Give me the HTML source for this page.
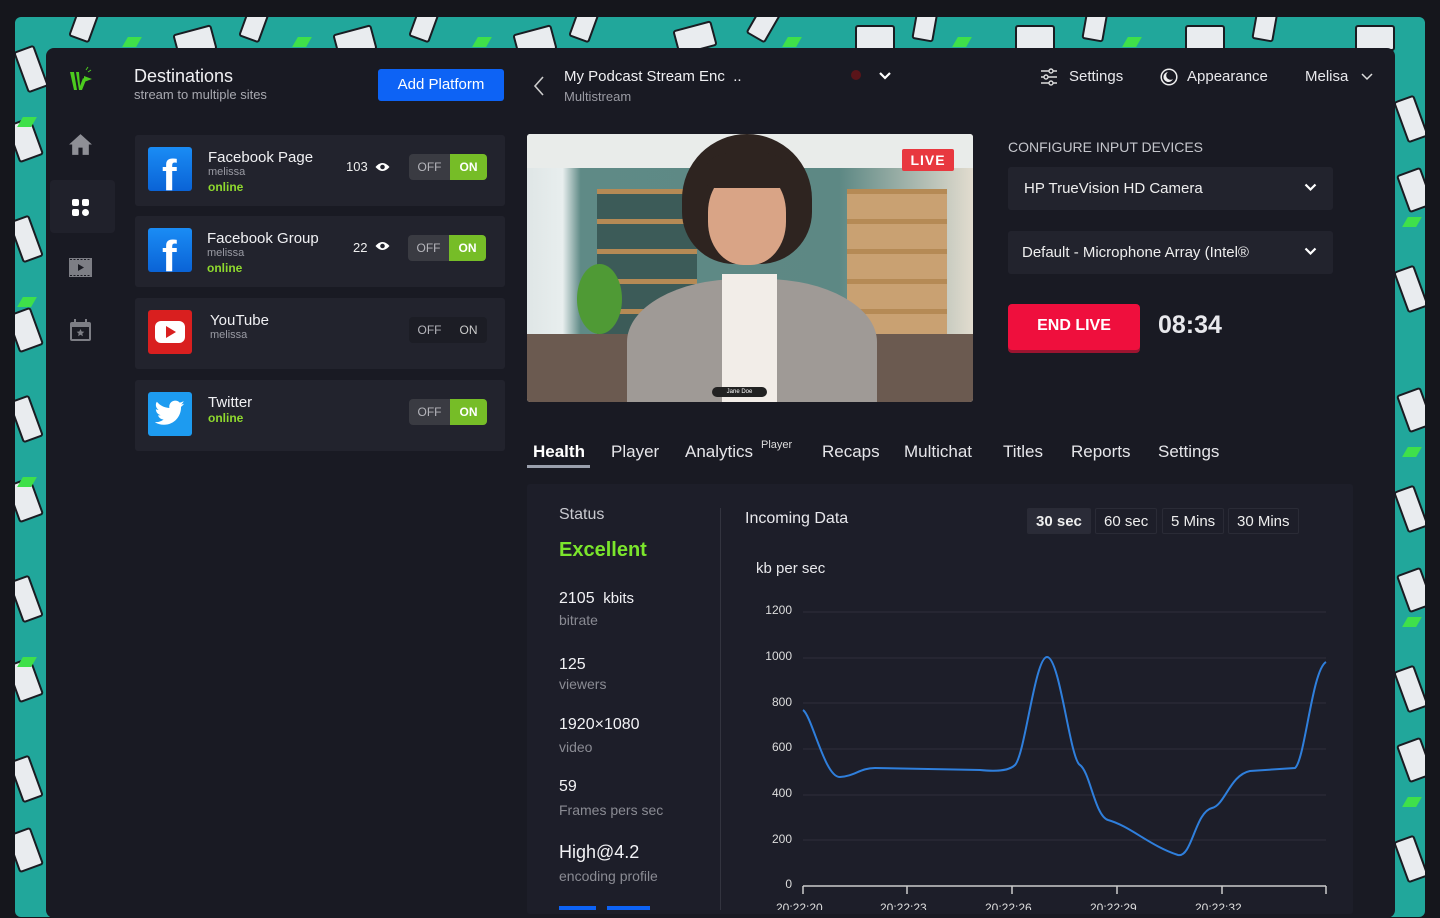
<!DOCTYPE html>
<html><head><meta charset="utf-8"><style>
*{box-sizing:border-box;margin:0;padding:0}
body{width:1440px;height:910px;overflow:hidden;background:#15161c;font-family:"Liberation Sans",sans-serif;color:#e8e8ec;position:relative}
.bg{position:absolute;left:15px;top:17px;width:1410px;height:900px;background:#21a79b;border-radius:6px;overflow:hidden}
.bg i{position:absolute;width:22px;height:44px;background:#e9ecef;border:2px solid #1a1c22;border-radius:3px}
.bg u{position:absolute;width:40px;height:26px;background:#e9ecef;border:2px solid #1a1c22;border-radius:3px}
.bg b{position:absolute;width:14px;height:10px;background:#3fe04a;transform:skewX(-30deg)}
.main{position:absolute;left:46px;top:48px;width:1349px;height:870px;background:#191a23;border-radius:8px}
.abs{position:absolute}
.card{position:absolute;left:135px;width:370px;height:71px;background:#22232d;border-radius:3px}
.fb{position:absolute;left:13px;top:12px;width:44px;height:44px;border-radius:3px;background:linear-gradient(#1a8cf5,#0a63d6);overflow:hidden}
.fb span{position:absolute;left:14px;top:7px;font:bold 44px "Liberation Sans",sans-serif;color:#fff;line-height:44px}
.nm{position:absolute;left:73px;top:14px;font-size:15px;color:#f0f0f3}
.us{position:absolute;left:73px;top:31px;font-size:11px;color:#9a9ba4}
.on{position:absolute;left:73px;top:45px;font-size:12px;font-weight:bold;color:#8fd92e}
.tg{position:absolute;left:274px;top:19px;width:78px;height:26px;border-radius:4px;background:#3a3b42;font-size:12px;color:#b5b5bb}
.tg .o{position:absolute;left:0;top:0;width:41px;height:26px;line-height:26px;text-align:center}
.tg .n{position:absolute;left:41px;top:0;width:37px;height:26px;line-height:26px;text-align:center;background:#76bd27;color:#fff;font-weight:bold;border-radius:0 4px 4px 0}
.tg.off{background:#1c1d25}.tg.off .n{background:none;color:#ccc;font-weight:normal}
.vw{position:absolute;top:24px;font-size:13px;color:#eee}
.sel{position:absolute;left:1008px;width:325px;height:43px;background:#22232d;border-radius:3px;font-size:15px;color:#eee;line-height:43px;padding-left:16px}
.sel svg{position:absolute;right:16px;top:16px}
.tab{position:absolute;top:442px;font-size:17px;color:#e6e6ea}
.stl{position:absolute;left:559px;font-size:16px;color:#f2f2f5}
.sts{position:absolute;left:559px;font-size:14px;color:#8a8b93}
.tb{position:absolute;top:508px;height:26px;line-height:26px;font-size:15px;padding:0 8px;border:1px solid #2a2b36;border-radius:2px;color:#eee}
.yl{position:absolute;font-size:12px;color:#ddd;text-align:right;width:40px;left:752px}
</style></head><body>
<div class="bg">
<i style="left:5px;top:30px;transform:rotate(-20deg)"></i><i style="left:0;top:200px;transform:rotate(-20deg)"></i><i style="left:0;top:380px;transform:rotate(-20deg)"></i><i style="left:0;top:560px;transform:rotate(-20deg)"></i><i style="left:0;top:740px;transform:rotate(-20deg)"></i>
<u style="left:-10px;top:110px;transform:rotate(70deg)"></u><u style="left:-10px;top:300px;transform:rotate(70deg)"></u><u style="left:-10px;top:470px;transform:rotate(70deg)"></u><u style="left:-10px;top:650px;transform:rotate(70deg)"></u><u style="left:-10px;top:820px;transform:rotate(70deg)"></u>
<i style="left:60px;top:-20px;transform:rotate(20deg)"></i><i style="left:230px;top:-20px;transform:rotate(20deg)"></i><i style="left:400px;top:-20px;transform:rotate(20deg)"></i><i style="left:560px;top:-20px;transform:rotate(20deg)"></i><i style="left:740px;top:-20px;transform:rotate(30deg)"></i><i style="left:900px;top:-20px;transform:rotate(10deg)"></i><i style="left:1070px;top:-20px;transform:rotate(10deg)"></i><i style="left:1240px;top:-20px;transform:rotate(10deg)"></i>
<u style="left:160px;top:12px;transform:rotate(-15deg)"></u><u style="left:320px;top:12px;transform:rotate(-15deg)"></u><u style="left:500px;top:12px;transform:rotate(-15deg)"></u><u style="left:660px;top:8px;transform:rotate(-15deg)"></u><u style="left:840px;top:8px"></u><u style="left:1000px;top:8px"></u><u style="left:1170px;top:8px"></u><u style="left:1340px;top:8px"></u>
<i style="left:1385px;top:80px;transform:rotate(-20deg)"></i><i style="left:1385px;top:250px;transform:rotate(-20deg)"></i><i style="left:1385px;top:470px;transform:rotate(-20deg)"></i><i style="left:1385px;top:650px;transform:rotate(-20deg)"></i><i style="left:1385px;top:820px;transform:rotate(-20deg)"></i>
<u style="left:1380px;top:160px;transform:rotate(70deg)"></u><u style="left:1380px;top:380px;transform:rotate(70deg)"></u><u style="left:1380px;top:560px;transform:rotate(70deg)"></u><u style="left:1380px;top:730px;transform:rotate(70deg)"></u>
<b style="left:110px;top:20px"></b><b style="left:280px;top:20px"></b><b style="left:460px;top:20px"></b><b style="left:770px;top:20px"></b><b style="left:940px;top:20px"></b><b style="left:1110px;top:20px"></b><b style="left:5px;top:100px"></b><b style="left:5px;top:280px"></b><b style="left:5px;top:460px"></b><b style="left:5px;top:640px"></b><b style="left:1390px;top:200px"></b><b style="left:1390px;top:430px"></b><b style="left:1390px;top:600px"></b><b style="left:1390px;top:780px"></b>
</div>
<div class="main"></div>
<svg class="abs" style="left:68px;top:66px" width="26" height="28" viewBox="0 0 26 28"><path d="M2 6 L6 24 L9 24 L6 6Z M8 6 L11 24 L14 24 L18 14 L15 12 L12 20 L11 6Z M16 16 L24 13 L16 10Z" fill="#4ccb1e"/><path d="M18 4 L20 1 M20 6 L23 4" stroke="#4ccb1e" stroke-width="1"/></svg>
<div class="abs" style="left:50px;top:180px;width:65px;height:53px;background:#20212b;border-radius:4px"></div>
<svg class="abs" style="left:68px;top:132px" width="25" height="25" viewBox="0 0 24 24"><path d="M12 2 L23 12 L20 12 L20 22 L14 22 L14 15 L10 15 L10 22 L4 22 L4 12 L1 12Z" fill="#8e8f96"/></svg>
<svg class="abs" style="left:72px;top:199px" width="17" height="17" viewBox="0 0 17 17" fill="#fff"><rect x="0" y="0" width="7" height="7" rx="2"/><rect x="10" y="0" width="7" height="7" rx="2"/><rect x="0" y="10" width="7" height="7" rx="2"/><circle cx="13.5" cy="13.5" r="3.5"/></svg>
<svg class="abs" style="left:69px;top:258px" width="23" height="19" viewBox="0 0 23 19"><rect width="23" height="19" fill="#7d7e85"/><path d="M9 6 L15 9.5 L9 13Z" fill="#1a1b23"/><path d="M1 1.5h21M1 17.5h21" stroke="#1a1b23" stroke-dasharray="2 1.5"/></svg>
<svg class="abs" style="left:69px;top:319px" width="23" height="23" viewBox="0 0 23 23"><rect x="1" y="3" width="21" height="19" rx="2" fill="#7d7e85"/><rect x="3" y="8" width="17" height="12" fill="#1a1b23"/><path d="M6 0v5M17 0v5" stroke="#7d7e85" stroke-width="2"/><path d="M11.5 10l1.2 2.5 2.6.3-2 1.8.6 2.6-2.4-1.4-2.4 1.4.6-2.6-2-1.8 2.6-.3z" fill="#7d7e85"/></svg>
<div class="abs" style="left:134px;top:66px;font-size:18px;color:#f0f0f3">Destinations</div>
<div class="abs" style="left:134px;top:87px;font-size:13px;color:#a8a9b0">stream to multiple sites</div>
<div class="abs" style="left:378px;top:69px;width:126px;height:32px;background:#0d63f5;border-radius:3px;color:#fff;font-size:15px;line-height:32px;text-align:center">Add Platform</div>
<div class="card" style="top:135px"><div class="fb"><span>f</span></div><div class="nm">Facebook Page</div><div class="us">melissa</div><div class="on">online</div><div class="vw" style="left:211px">103</div><svg class="abs" style="left:240px;top:27px" width="15" height="10" viewBox="0 0 15 10"><path d="M0.5 5Q7.5 -3 14.5 5Q7.5 13 0.5 5Z" fill="#fff"/><circle cx="7.5" cy="5" r="2.3" fill="#22232d"/></svg><div class="tg"><div class="o">OFF</div><div class="n">ON</div></div></div>
<div class="card" style="top:216px"><div class="fb"><span>f</span></div><div class="nm" style="left:72px">Facebook Group</div><div class="us" style="left:72px">melissa</div><div class="on" style="left:72px">online</div><div class="vw" style="left:218px">22</div><svg class="abs" style="left:240px;top:25px" width="15" height="10" viewBox="0 0 15 10"><path d="M0.5 5Q7.5 -3 14.5 5Q7.5 13 0.5 5Z" fill="#fff"/><circle cx="7.5" cy="5" r="2.3" fill="#22232d"/></svg><div class="tg" style="left:273px;top:19px"><div class="o">OFF</div><div class="n">ON</div></div></div>
<div class="card" style="top:298px"><div class="abs" style="left:13px;top:12px;width:44px;height:44px;background:#d91f1f;border-radius:3px"><div class="abs" style="left:7px;top:11px;width:30px;height:22px;background:#fff;border-radius:6px"></div><svg class="abs" style="left:17px;top:16px" width="12" height="12"><path d="M1 0L11 6L1 12Z" fill="#d91f1f"/></svg></div><div class="nm" style="left:75px">YouTube</div><div class="us" style="left:75px">melissa</div><div class="tg off"><div class="o">OFF</div><div class="n">ON</div></div></div>
<div class="card" style="top:380px"><div class="abs" style="left:13px;top:12px;width:44px;height:44px;background:#1d9bf0;border-radius:3px"><svg class="abs" style="left:7px;top:8px" width="30" height="26" viewBox="0 0 24 20"><path d="M23.6 2.4c-.9.4-1.8.6-2.8.8 1-.6 1.8-1.6 2.1-2.7-.9.6-2 1-3.1 1.2C18.9.7 17.6.1 16.2.1c-2.7 0-4.8 2.2-4.8 4.8 0 .4 0 .8.1 1.1C7.4 5.800 3.900 3.900 1.500 1 .9 1.700.7 2.600.7 3.500c0 1.700.9 3.200 2.200 4-.8 0-1.500-.2-2.200-.6v.1c0 2.300 1.700 4.300 3.900 4.700-.4.100-.8.200-1.300.200-.3 0-.6 0-.9-.1.6 1.900 2.400 3.300 4.500 3.400-1.700 1.300-3.700 2.100-6 2.100-.4 0-.8 0-1.200-.1 2.100 1.400 4.700 2.200 7.400 2.200 8.900 0 13.700-7.400 13.700-13.700v-.6c1-.7 1.800-1.600 2.400-2.500z" fill="#fff"/></svg></div><div class="nm" style="left:73px">Twitter</div><div class="on" style="left:73px;top:31px">online</div><div class="tg"><div class="o">OFF</div><div class="n">ON</div></div></div>
<svg class="abs" style="left:533px;top:75px" width="12" height="22" viewBox="0 0 12 22"><path d="M10 2L2 11L10 20" stroke="#ccc" stroke-width="1.6" fill="none"/></svg>
<div class="abs" style="left:564px;top:68px;font-size:15px;color:#f0f0f3">My Podcast Stream Enc &nbsp;..</div>
<div class="abs" style="left:564px;top:89px;font-size:13px;color:#9a9ba3">Multistream</div>
<div class="abs" style="left:851px;top:70px;width:10px;height:10px;border-radius:50%;background:#5a1419"></div>
<svg class="abs" style="left:878px;top:71px" width="14" height="10"><path d="M2 2L7 7L12 2" stroke="#fff" stroke-width="2.2" fill="none"/></svg>
<svg class="abs" style="left:1040px;top:68px" width="18" height="18" viewBox="0 0 18 18" stroke="#ddd" stroke-width="1.4" fill="none"><path d="M1 3h16M1 9h16M1 15h16"/><circle cx="11" cy="3" r="2" fill="#191a23"/><circle cx="6" cy="9" r="2" fill="#191a23"/><circle cx="11" cy="15" r="2" fill="#191a23"/></svg>
<div class="abs" style="left:1069px;top:68px;font-size:15px">Settings</div>
<svg class="abs" style="left:1160px;top:68px" width="18" height="18" viewBox="0 0 18 18"><circle cx="9" cy="9" r="7.8" stroke="#eee" stroke-width="1.5" fill="none"/><path d="M8 4A5 5 0 1 0 13 11A4 4 0 0 1 8 4Z" fill="#eee"/></svg>
<div class="abs" style="left:1187px;top:68px;font-size:15px">Appearance</div>
<div class="abs" style="left:1305px;top:68px;font-size:15px">Melisa</div>
<svg class="abs" style="left:1361px;top:73px" width="12" height="8"><path d="M1 1L6 6L11 1" stroke="#ddd" stroke-width="1.5" fill="none"/></svg>
<div class="abs" style="left:527px;top:134px;width:446px;height:268px;border-radius:3px;overflow:hidden;background:linear-gradient(90deg,#dfe6e6 0,#e8eeee 8%,#5f8a86 12%,#5d8884 70%,#e2dccf 100%)">
<div class="abs" style="left:0;top:0;width:446px;height:34px;background:#e9ecea"></div>
<div class="abs" style="left:70px;top:55px;width:100px;height:150px;background:repeating-linear-gradient(#b58a55 0 5px,#3c5b58 5px 30px)"></div>
<div class="abs" style="left:320px;top:55px;width:100px;height:150px;background:repeating-linear-gradient(#b58a55 0 5px,#c9a172 5px 30px)"></div>
<div class="abs" style="left:50px;top:130px;width:45px;height:70px;background:#4f9a35;border-radius:50%"></div>
<div class="abs" style="left:0;top:200px;width:446px;height:68px;background:#6b5a50"></div>
<div class="abs" style="left:155px;top:0;width:130px;height:130px;border-radius:50% 50% 40% 40%;background:#2e2420"></div>
<div class="abs" style="left:181px;top:35px;width:78px;height:96px;border-radius:45%;background:#d9a486"></div>
<div class="abs" style="left:180px;top:18px;width:80px;height:36px;border-radius:40% 40% 10% 10%;background:#2e2420"></div>
<div class="abs" style="left:100px;top:145px;width:250px;height:140px;border-radius:45% 45% 0 0;background:#9f9a96"></div>
<div class="abs" style="left:195px;top:140px;width:55px;height:130px;background:#f2ede8"></div>
<div class="abs" style="left:375px;top:15px;width:52px;height:22px;background:#e8383f;border-radius:2px;color:#fff;font-weight:bold;font-size:14px;line-height:22px;text-align:center;letter-spacing:1px">LIVE</div>
<div class="abs" style="left:185px;top:253px;width:55px;height:10px;background:#222;border-radius:5px;font-size:6px;color:#fff;text-align:center;line-height:10px">Jane Doe</div>
</div>
<div class="abs" style="left:1008px;top:139px;font-size:14px;color:#c5c6cc">CONFIGURE INPUT DEVICES</div>
<div class="sel" style="top:167px">HP TrueVision HD Camera<svg width="13" height="9"><path d="M1.5 1.5L6.5 6.5L11.5 1.5" stroke="#fff" stroke-width="2.2" fill="none"/></svg></div>
<div class="sel" style="top:231px;padding-left:14px">Default - Microphone Array (Intel®<svg width="13" height="9"><path d="M1.5 1.5L6.5 6.5L11.5 1.5" stroke="#fff" stroke-width="2.2" fill="none"/></svg></div>
<div class="abs" style="left:1008px;top:304px;width:132px;height:46px;background:#ef0f3d;border-radius:4px;box-shadow:0 3px 0 #9c1430;color:#fff;font-weight:bold;font-size:16px;line-height:44px;text-align:center">END LIVE</div>
<div class="abs" style="left:1158px;top:311px;font-size:25px;font-weight:bold;color:#e8e8ec">08:34</div>
<div class="tab" style="left:533px;font-weight:bold;color:#fff">Health</div>
<div class="abs" style="left:527px;top:465px;width:63px;height:3px;background:#9aa0ad"></div>
<div class="tab" style="left:611px">Player</div>
<div class="tab" style="left:685px">Analytics</div>
<div class="abs" style="left:761px;top:439px;font-size:11px;color:#ddd">Player</div>
<div class="tab" style="left:822px">Recaps</div>
<div class="tab" style="left:904px">Multichat</div>
<div class="tab" style="left:1003px">Titles</div>
<div class="tab" style="left:1071px">Reports</div>
<div class="tab" style="left:1158px">Settings</div>
<div class="abs" style="left:527px;top:484px;width:826px;height:430px;background:#1d1e29;border-radius:3px"></div>
<div class="abs" style="left:720px;top:508px;width:1px;height:402px;background:#33343f"></div>
<div class="sts" style="top:506px;font-size:16px;color:#c9cad0">Status</div>
<div class="abs" style="left:559px;top:539px;font-size:20px;font-weight:bold;color:#7be52c">Excellent</div>
<div class="stl" style="top:590px">2105 <span style="font-size:15px">&nbsp;kbits</span></div><div class="sts" style="top:612px">bitrate</div>
<div class="stl" style="top:656px">125</div><div class="sts" style="top:676px">viewers</div>
<div class="stl" style="top:716px">1920×1080</div><div class="sts" style="top:739px">video</div>
<div class="stl" style="top:778px">59</div><div class="sts" style="top:802px">Frames pers sec</div>
<div class="stl" style="top:842px;font-size:18px">High@4.2</div><div class="sts" style="top:868px">encoding profile</div>
<div class="abs" style="left:559px;top:906px;width:37px;height:4px;background:#0d63f5"></div>
<div class="abs" style="left:607px;top:906px;width:43px;height:4px;background:#0d63f5"></div>
<div class="abs" style="left:745px;top:510px;font-size:16px">Incoming Data</div>
<div class="tb" style="left:1027px;background:#2a2b37;font-weight:bold">30 sec</div>
<div class="tb" style="left:1095px">60 sec</div>
<div class="tb" style="left:1162px">5 Mins</div>
<div class="tb" style="left:1228px">30 Mins</div>
<div class="abs" style="left:756px;top:560px;font-size:15px">kb per sec</div>
<div class="yl" style="top:603px">1200</div><div class="yl" style="top:649px">1000</div><div class="yl" style="top:695px">800</div><div class="yl" style="top:740px">600</div><div class="yl" style="top:786px">400</div><div class="yl" style="top:832px">200</div><div class="yl" style="top:877px">0</div>
<svg class="abs" style="left:0;top:0" width="1440" height="910">
<g stroke="#2e2f3a" stroke-width="1"><path d="M803 612H1326M803 658H1326M803 703H1326M803 749H1326M803 795H1326M803 840H1326"/></g>
<path d="M803 886H1326M803 886v8M907 886v8M1012 886v8M1117 886v8M1222 886v8M1326 886v8" stroke="#ccc" stroke-width="1.5" fill="none"/>
<path d="M803 710C812 716 825 778 840 777S860 768 875 768L980 770C1000 772 1010 770 1015 765C1025 755 1035 657 1047 657C1060 657 1070 760 1080 765C1090 772 1095 816 1108 820C1130 826 1150 846 1178 855C1192 858 1195 812 1212 808C1225 805 1230 775 1250 771L1295 768C1305 760 1312 670 1326 662" stroke="#2f7fdc" stroke-width="2" fill="none"/>
<g fill="#ddd" font-size="12" font-family="Liberation Sans"><text x="776" y="912">20:22:20</text><text x="880" y="912">20:22:23</text><text x="985" y="912">20:22:26</text><text x="1090" y="912">20:22:29</text><text x="1195" y="912">20:22:32</text></g>
</svg>
</body></html>
